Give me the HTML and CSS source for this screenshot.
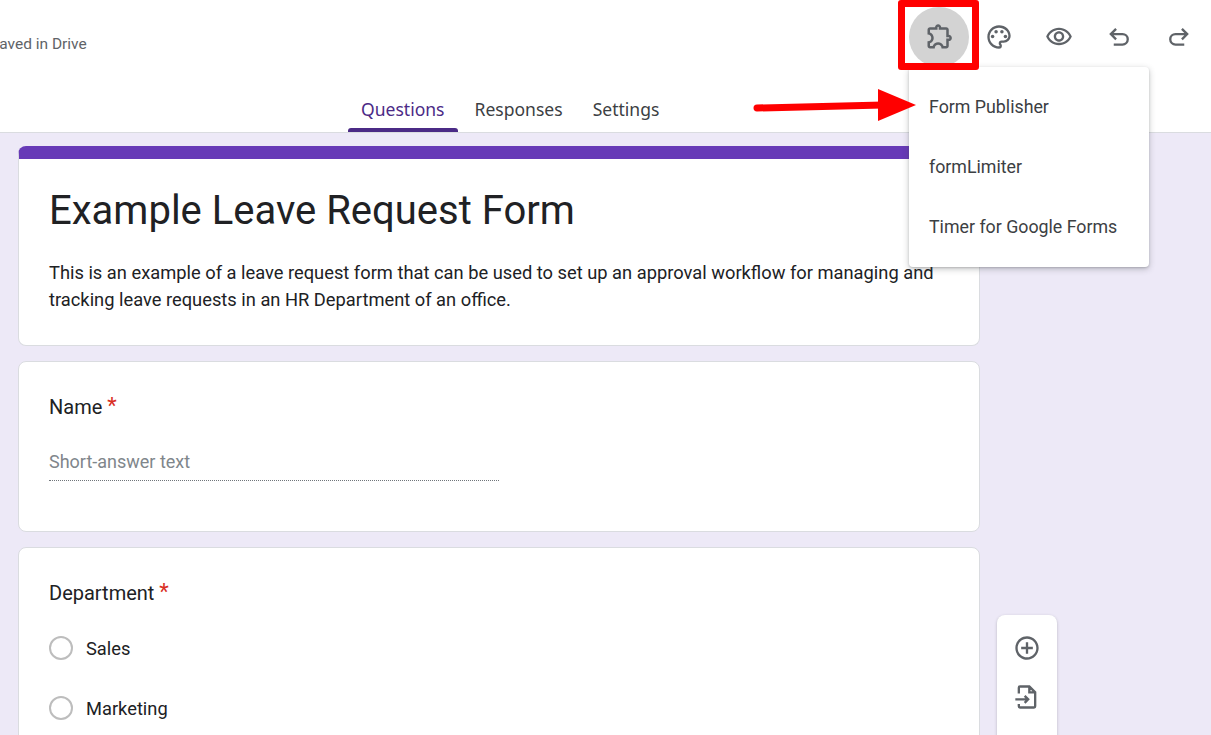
FILE: index.html
```html
<!DOCTYPE html>
<html lang="en">
<head>
    <meta charset="UTF-8">
    <title>Example Leave Request Form</title>
    <meta name="viewport" content="width=device-width, initial-scale=1.0">
    <link rel="stylesheet" href="styles.css">
</head>
<body>
    <div class="header">
        <div class="top-row">
            <div class="save-status">Saved in Drive</div>
            <div class="icon-row">
                <div class="icon-btn active">
                    <svg viewBox="-0.8 0.8 24 24"><path d="M10.5 4.5c.28 0 .5.22.5.5v2h6v6h2c.28 0 .5.22.5.5s-.22.5-.5.5h-2v6h-2.12c-.68-1.75-2.39-3-4.38-3s-3.7 1.25-4.38 3H4v-2.12c1.75-.68 3-2.39 3-4.38 0-1.99-1.24-3.7-2.99-4.38L4 7h6V5c0-.28.22-.5.5-.5m0-2C9.12 2.5 8 3.62 8 5H4c-1.1 0-1.99.9-1.99 2v3.8h.29c1.49 0 2.7 1.21 2.7 2.7s-1.21 2.7-2.7 2.7H2V20c0 1.1.9 2 2 2h3.8v-.3c0-1.49 1.21-2.7 2.7-2.7s2.7 1.21 2.7 2.7v.3H17c1.1 0 2-.9 2-2v-4c1.38 0 2.5-1.12 2.5-2.5S20.38 11 19 11V7c0-1.1-.9-2-2-2h-4c0-1.38-1.12-2.5-2.5-2.5z"/></svg>
                </div>
                <div class="icon-btn">
                    <svg viewBox="0 0 24 24"><path d="M12 22C6.49 22 2 17.51 2 12S6.49 2 12 2s10 4.04 10 9c0 3.31-2.69 6-6 6h-1.77c-.28 0-.5.22-.5.5 0 .12.05.23.13.33.41.47.64 1.06.64 1.67A2.5 2.5 0 0 1 12 22zm0-18c-4.41 0-8 3.59-8 8s3.59 8 8 8c.28 0 .5-.22.5-.5a.54.54 0 0 0-.14-.35c-.41-.46-.63-1.05-.63-1.65a2.5 2.5 0 0 1 2.5-2.5H16c2.21 0 4-1.79 4-4 0-3.86-3.59-7-8-7z"/><circle cx="6.5" cy="11.5" r="1.5"/><circle cx="9.5" cy="7.5" r="1.5"/><circle cx="14.5" cy="7.5" r="1.5"/><circle cx="17.5" cy="11.5" r="1.5"/></svg>
                </div>
                <div class="icon-btn">
                    <svg viewBox="0 0 24 24"><path d="M12 6c3.79 0 7.17 2.13 8.82 5.5C19.17 14.87 15.79 17 12 17s-7.17-2.13-8.82-5.5C4.83 8.13 8.21 6 12 6m0-2C7 4 2.73 7.11 1 11.5 2.73 15.89 7 19 12 19s9.27-3.11 11-7.5C21.27 7.11 17 4 12 4zm0 5c1.38 0 2.5 1.12 2.5 2.5S13.38 14 12 14s-2.5-1.12-2.5-2.5S10.62 9 12 9m0-2c-2.48 0-4.5 2.02-4.5 4.5S9.52 16 12 16s4.5-2.02 4.5-4.5S14.48 7 12 7z"/></svg>
                </div>
                <div class="icon-btn">
                    <svg viewBox="0 0 24 24"><path class="line" d="M9.5 5L5 9.5L9.5 14M5 9.5H15a4.5 4.5 0 0 1 0 9H7.5"/></svg>
                </div>
                <div class="icon-btn">
                    <svg viewBox="0 0 24 24"><path class="line" d="M14.5 5L19 9.5L14.5 14M19 9.5H9a4.5 4.5 0 0 0 0 9H16.5"/></svg>
                </div>
            </div>
        </div>
        <div class="tabs">
            <div class="tab selected">Questions</div>
            <div class="tab">Responses</div>
            <div class="tab">Settings</div>
        </div>
    </div>

    <div class="main">
        <div class="form-col">
            <div class="card title-card">
                <h1>Example Leave Request Form</h1>
                <p class="description">This is an example of a leave request form that can be used to set up an approval workflow for managing and tracking leave requests in an HR Department of an office.</p>
            </div>
            <div class="card name-card">
                <div class="question">Name <span class="required">*</span></div>
                <div class="short-answer">Short-answer text</div>
            </div>
            <div class="card department-card">
                <div class="question">Department <span class="required">*</span></div>
                <div class="option"><span class="radio"></span>Sales</div>
                <div class="option"><span class="radio"></span>Marketing</div>
            </div>
        </div>
        <div class="side-toolbar">
            <svg viewBox="0 0 24 24"><path d="M13 7h-2v4H7v2h4v4h2v-4h4v-2h-4V7zm-1-5C6.49 2 2 6.49 2 12s4.49 10 10 10 10-4.49 10-10S17.51 2 12 2zm0 18c-4.41 0-8-3.59-8-8s3.59-8 8-8 8 3.59 8 8-3.59 8-8 8z"/></svg>
            <svg viewBox="0 0 24 24"><path class="line" d="M5 9V4a1 1 0 0 1 1-1h8l5 5v12a1 1 0 0 1-1 1H6a1 1 0 0 1-1-1v-2M14 3v5h5M2 14h11M10 11l3 3l-3 3"/></svg>
        </div>
    </div>

    <!-- addon menu and the annotations drawn on top of the screenshot -->
    <div class="addon-menu">
        <div class="menu-item">Form Publisher</div>
        <div class="menu-item">formLimiter</div>
        <div class="menu-item">Timer for Google Forms</div>
    </div>
    <div class="red-box"></div>
    <svg class="red-arrow" viewBox="0 0 170 40">
        <path d="M4 22L130 19" stroke="#ff0000" stroke-width="7" stroke-linecap="round" fill="none"/>
        <polygon points="125,3 163,19 125,35" fill="#ff0000"/>
    </svg>
</body>
</html>
```

FILE: styles.css
```css
* { margin: 0; padding: 0; box-sizing: border-box; }
body {
    font-family: Roboto, "Liberation Sans", sans-serif;
    background: #ede9f7;
    color: #202124;
    height: 735px;
    overflow: hidden;
    position: relative;
}
.header {
    background: #ffffff;
    height: 133px;
    border-bottom: 1px solid #dadce0;
}
.top-row {
    height: 88px;
    display: flex;
    justify-content: space-between;
}
.save-status {
    margin-left: -10px;
    margin-top: 35px;
    font-size: 15.5px;
    line-height: 18px;
    color: #5f6368;
}
.icon-row {
    display: flex;
    padding: 7px 2px 0 0;
    height: 67px;
}
.icon-btn {
    width: 60px; height: 60px;
    border-radius: 50%;
    display: flex; align-items: center; justify-content: center;
}
.icon-btn.active { background: #d3d3d3; }
.icon-btn svg { width: 28px; height: 28px; fill: #5f6368; }
.icon-btn.active svg { width: 30px; height: 30px; }
.line { fill: none; stroke: #5f6368; stroke-width: 2; }
.tabs {
    display: flex;
    height: 44px;
    padding-left: 348px;
    gap: 4px;
}
.tab {
    padding: 9px 13px 0;
    font-family: "Noto Sans", Roboto, sans-serif;
    font-size: 17.55px;
    font-weight: 450;
    line-height: 24px;
    color: #3c4043;
    position: relative;
}
.tab.selected { color: #4b2a86; }
.tab.selected::after {
    content: "";
    position: absolute;
    left: 0; right: 0; bottom: 0;
    height: 4px;
    background: #4b2a86;
    border-radius: 3px 3px 0 0;
}
.main {
    display: flex;
    gap: 17px;
    padding: 13px 0 0 18px;
}
.form-col {
    width: 962px;
    display: flex;
    flex-direction: column;
    gap: 15px;
}
.card {
    background: #ffffff;
    border: 1px solid #dadce0;
    border-radius: 8px;
    padding: 30px 30px 24px;
}
.title-card {
    height: 200px;
    border-top: 13px solid #673ab7;
    padding-top: 26px;
}
h1 {
    font-size: 40px;
    font-weight: 400;
    line-height: 52px;
    margin-bottom: 22px;
}
.description {
    font-size: 18.31px;
    line-height: 27px;
}
.name-card { height: 171px; }
.department-card { min-height: 300px; }
.question {
    font-size: 20px;
    line-height: 30px;
}
.required {
    color: #d93025;
    font-size: 22px;
    line-height: 20px;
    vertical-align: 1px;
}
.short-answer {
    width: 450px;
    margin-top: 27px;
    padding-bottom: 5px;
    font-size: 18px;
    line-height: 26px;
    color: #80868b;
    border-bottom: 1px dotted #70757a;
}
.option {
    display: flex;
    align-items: center;
    gap: 13px;
    height: 60px;
    font-size: 18.3px;
    color: #202124;
}
.question + .option { margin-top: 10px; }
.radio {
    width: 24px; height: 24px;
    border: 2px solid #bdbdbd;
    border-radius: 50%;
}
.side-toolbar {
    width: 60px;
    height: 200px;
    margin-top: 469px;
    background: #ffffff;
    border-radius: 8px;
    box-shadow: 0 1px 3px rgba(60, 64, 67, 0.3);
    display: flex;
    flex-direction: column;
    align-items: center;
    gap: 21px;
    padding-top: 19px;
}
.side-toolbar svg { width: 28px; height: 28px; fill: #5f6368; }
.addon-menu {
    position: absolute;
    top: 67px; left: 909px;
    width: 240px;
    background: #ffffff;
    border-radius: 4px;
    box-shadow: 0 2px 6px rgba(60, 64, 67, 0.3), 0 1px 2px rgba(60, 64, 67, 0.2);
    padding: 9px 0 11px;
}
.menu-item {
    height: 60px;
    padding: 0 20px;
    display: flex;
    align-items: center;
    font-size: 17.8px;
    color: #3c4043;
}
.red-box {
    position: absolute;
    top: 0; left: 898px;
    width: 81px; height: 70px;
    border: 7px solid #ff0000;
    border-radius: 3px;
}
.red-arrow {
    position: absolute;
    top: 86px; left: 753px;
    width: 170px; height: 40px;
}
```
